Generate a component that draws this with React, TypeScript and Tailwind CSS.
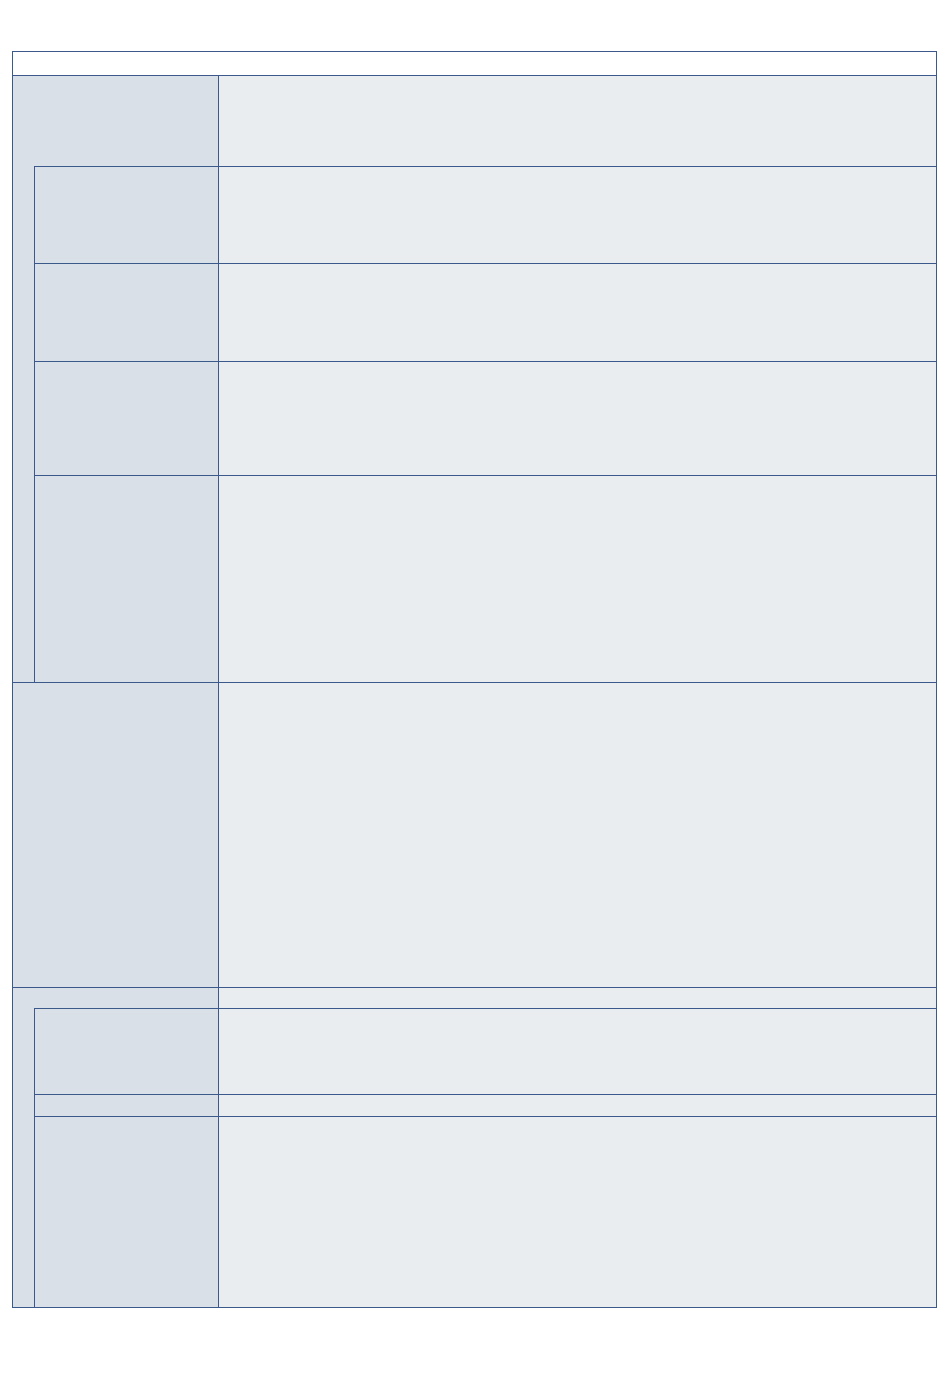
import React from "react";

const B = "border-[#3b5a8b]";

function Row({ h, full }: { h: number; full?: boolean }) {
  return (
    <div className="flex" style={{ height: h }}>
      <div className={`${full ? "w-[206px]" : "w-[184px]"} shrink-0 bg-[#d9e0e8] border-r ${B}`} />
      <div className="flex-1 bg-[#e9edf0]" />
    </div>
  );
}

function Group({ first, subs, last }: { first: number; subs: number[]; last?: boolean }) {
  return (
    <div className={`flex flex-col ${last ? "" : `border-b ${B}`}`}>
      <Row h={first} full />
      <div className="flex">
        <div className="w-[21px] shrink-0 bg-[#d9e0e8]" />
        <div className={`flex-1 flex flex-col border-l ${B}`}>
          {subs.map((h, i) => (
            <div key={i} className={`border-t ${B}`}>
              <Row h={h} />
            </div>
          ))}
        </div>
      </div>
    </div>
  );
}

export default function App() {
  return (
    <div className="min-h-[1397px] bg-white pt-[51px] pl-[12px]" style={{ fontFamily: "'Liberation Sans', sans-serif" }}>
      <div className={`w-[925px] border ${B} flex flex-col`}>
        <div className={`h-[24px] bg-white border-b ${B}`} />
        <Group first={90} subs={[96, 97, 113, 206]} />
        <div className={`border-b ${B}`}>
          <Row h={304} full />
        </div>
        <Group first={20} subs={[85, 21, 190]} last />
      </div>
    </div>
  );
}
